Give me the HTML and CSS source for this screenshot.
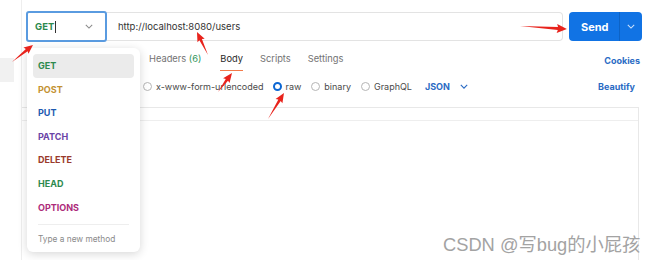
FILE: index.html
```html
<!DOCTYPE html>
<html lang="en">
<head>
    <meta charset="UTF-8">
    <title>Request</title>
    <link rel="stylesheet" href="styles.css">
</head>
<body>
    <div class="app">
        <div class="sidebar">
            <div class="side-item"></div>
        </div>
        <div class="main">
            <div class="request-bar">
                <div class="method-select">
                    <span class="method-text">GET</span><span class="caret"></span>
                    <svg class="chev" width="8" height="5" viewBox="0 0 10 6"><path d="M1 1l4 4 4-4" fill="none" stroke="#8a8a8a" stroke-width="1.3"/></svg>
                </div>
                <div class="url-input">http://localhost:8080/users</div>
                <div class="send-btn">
                    <span class="send-label">Send</span>
                    <span class="send-more">
                        <svg width="8" height="5" viewBox="0 0 10 6"><path d="M1 1l4 4 4-4" fill="none" stroke="#cfe2fb" stroke-width="1.3"/></svg>
                    </span>
                </div>
            </div>

            <div class="tabs">
                <span class="tab">Headers <span class="count">(6)</span></span>
                <span class="tab active">Body</span>
                <span class="tab">Scripts</span>
                <span class="tab">Settings</span>
                <span class="link right">Cookies</span>
            </div>

            <div class="body-types">
                <span class="radio"><i class="dot"></i>x-www-form-urlencoded</span>
                <span class="radio selected"><i class="dot"></i>raw</span>
                <span class="radio"><i class="dot"></i>binary</span>
                <span class="radio"><i class="dot"></i>GraphQL</span>
                <span class="link lang">JSON
                    <svg width="8" height="5" viewBox="0 0 10 6"><path d="M1 1l4 4 4-4" fill="none" stroke="#2a6bc4" stroke-width="1.4"/></svg>
                </span>
                <span class="link right">Beautify</span>
            </div>

            <div class="editor">
                <div class="editor-bar"></div>
            </div>
        </div>
    </div>

    <div class="method-menu">
        <div class="menu-item get current">GET</div>
        <div class="menu-item post">POST</div>
        <div class="menu-item put">PUT</div>
        <div class="menu-item patch">PATCH</div>
        <div class="menu-item delete">DELETE</div>
        <div class="menu-item head">HEAD</div>
        <div class="menu-item options">OPTIONS</div>
        <div class="menu-sep"></div>
        <div class="menu-new">Type a new method</div>
    </div>

    <!-- red annotation arrows -->
    <svg class="arrows" width="650" height="260" viewBox="0 0 650 260">
        <g fill="#e8231c">
            <polygon transform="translate(12,62) rotate(-39)" points="0,0 19,-1.4 18,-4 27,0 18,4 19,1.4"/>
            <polygon transform="translate(208,55) rotate(-115.6)" points="0,0 17,-1.4 16,-4 25.5,0 16,4 17,1.4"/>
            <polygon transform="translate(520,26) rotate(3.7)" points="0,0 38,-1.5 37,-4.5 47,0 37,4.5 38,1.5"/>
            <polygon transform="translate(218,92) rotate(-53.6)" points="0,0 15,-1.4 14,-4 23.6,0 14,4 15,1.4"/>
            <polygon transform="translate(268,119) rotate(-58.4)" points="0,0 22,-1.4 21,-4 30.5,0 21,4 22,1.4"/>
        </g>
    </svg>

    <div class="watermark">CSDN @写bug的小屁孩</div>
</body>
</html>
```

FILE: styles.css
```css
body {
    margin: 0;
    width: 650px;
    height: 260px;
    overflow: hidden;
    position: relative;
    background: #fff;
    font-family: Inter, "Liberation Sans", sans-serif;
    font-size: 9px;
    color: #3b3b3b;
}
.app {
    display: flex;
    height: 100%;
}
.sidebar {
    width: 21px;
    border-right: 1px solid #eeeeee;
    padding-top: 58px;
    flex-shrink: 0;
}
.side-item {
    width: 14px;
    height: 24px;
    background: #f1f1f1;
}
.main {
    flex: 1;
    display: flex;
    flex-direction: column;
}

/* request bar */
.request-bar {
    display: flex;
    height: 31px;
    margin: 11px 8px 0 4px;
}
.method-select {
    width: 81px;
    box-sizing: border-box;
    border: 2px solid #5a9be0;
    border-radius: 3px;
    display: flex;
    align-items: center;
    padding: 0 8px 0 7px;
}
.method-text {
    color: #2d8a4e;
    font-weight: 700;
    font-size: 9.5px;
}
.caret {
    width: 1px;
    height: 12px;
    background: #333;
    margin-left: 1px;
}
.chev {
    margin-left: auto;
    margin-right: 4px;
}
.url-input {
    flex: 1;
    margin: 1px 0;
    border: 1px solid #e3e3e3;
    border-left: none;
    border-radius: 0 4px 4px 0;
    display: flex;
    align-items: center;
    padding-left: 11px;
    font-size: 9.5px;
    color: #333;
}
.send-btn {
    width: 73px;
    margin: 1px 0 1px 6px;
    background: #1173e4;
    border-radius: 4px;
    display: flex;
    align-items: center;
    color: #fff;
    font-weight: 700;
    font-size: 11px;
}
.send-label {
    padding-left: 12px;
}
.send-more {
    margin-left: auto;
    width: 22px;
    height: 100%;
    border-left: 1px solid #0d63c6;
    display: flex;
    align-items: center;
    justify-content: center;
}

/* tabs */
.tabs {
    display: flex;
    align-items: center;
    height: 22px;
    margin-top: 7px;
    padding-left: 127px;
    padding-right: 10px;
}
.tab {
    color: #727272;
    font-size: 9.3px;
    margin-right: 17px;
    height: 22px;
    line-height: 20px;
    box-sizing: border-box;
}
.tab:first-child {
    margin-right: 19px;
}
.tab.active {
    color: #2a2a2a;
    border-bottom: 1px solid #f37a4a;
}
.count {
    color: #2e9457;
}
.link {
    color: #2a6bc4;
    font-weight: 700;
    font-size: 9px;
}
.right {
    margin-left: auto;
}

/* body type radios */
.body-types {
    display: flex;
    align-items: center;
    height: 20px;
    margin-top: 5px;
    padding-left: 121px;
    padding-right: 15px;
}
.radio {
    display: flex;
    align-items: center;
    color: #4a4a4a;
    font-size: 9px;
    margin-right: 10px;
}
.radio:first-child {
    margin-right: 9px;
}
.dot {
    width: 9px;
    height: 9px;
    box-sizing: border-box;
    border: 1px solid #b5b5b5;
    border-radius: 50%;
    margin-right: 4px;
}
.radio.selected .dot {
    border: 2.5px solid #0c67d3;
}
.lang {
    display: flex;
    align-items: center;
    gap: 10px;
    margin-left: 3px;
}

/* editor */
.editor {
    flex: 1;
    margin-top: 11px;
    margin-right: 11px;
    border-top: 1px solid #e8e8e8;
    border-right: 1px solid #e8e8e8;
}
.editor-bar {
    height: 12px;
    border-bottom: 1px solid #eeeeee;
}

/* method dropdown */
.method-menu {
    position: absolute;
    left: 27px;
    top: 48px;
    width: 113px;
    height: 204px;
    box-sizing: border-box;
    background: #fff;
    border-radius: 6px;
    box-shadow: 0 2px 10px rgba(0, 0, 0, 0.16);
    padding: 6px 6px;
    font-weight: 700;
    font-size: 9px;
}
.menu-item {
    height: 23.6px;
    line-height: 24px;
    padding-left: 5px;
    border-radius: 4px;
}
.menu-item.current {
    background: #ebebeb;
}
.get { color: #2d8a4e; }
.post { color: #c39232; }
.put { color: #1d59b0; }
.patch { color: #6a43a6; }
.delete { color: #9a3a2c; }
.head { color: #2d8a4e; }
.options { color: #ad2b7a; }
.menu-sep {
    height: 1px;
    background: #eeeeee;
    margin: 5px 5px 0 5px;
}
.menu-new {
    padding-left: 5px;
    margin-top: 6px;
    line-height: 16px;
    font-weight: 400;
    color: #8a8a8a;
    font-size: 8.3px;
}

.arrows {
    position: absolute;
    left: 0;
    top: 0;
    pointer-events: none;
}
.watermark {
    position: absolute;
    left: 443px;
    top: 230px;
    font-family: "Liberation Sans", "Noto Sans CJK SC", sans-serif;
    font-size: 18.3px;
    color: #a3a3a3;
    text-shadow: 1px 1px 0 rgba(255, 255, 255, 0.8);
    white-space: nowrap;
}
```
